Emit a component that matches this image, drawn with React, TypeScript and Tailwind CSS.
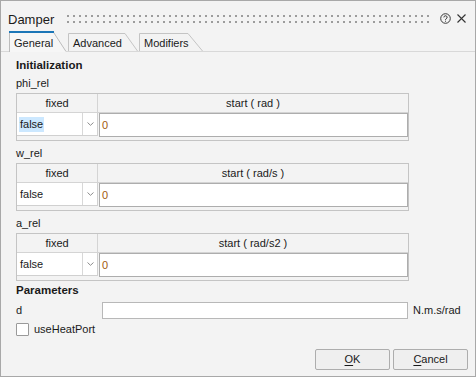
import React from "react";

function Grip() {
  return (
    <svg width="363" height="8" className="block">
      <defs>
        <pattern id="dots" width="6" height="6" patternUnits="userSpaceOnUse">
          <rect x="0" y="0" width="2" height="2" fill="#9c9c9c" />
        </pattern>
      </defs>
      <rect x="0" y="0" width="363" height="8" fill="url(#dots)" />
    </svg>
  );
}

function HelpIcon() {
  return (
    <svg width="11" height="11" viewBox="0 0 11 11" className="block">
      <circle cx="5.5" cy="5.5" r="4.8" fill="none" stroke="#3a3a3a" strokeWidth="1" />
      <path d="M3.9 4.4 A1.6 1.6 0 1 1 6.2 5.8 C5.6 6.1 5.5 6.4 5.5 7" fill="none" stroke="#3a3a3a" strokeWidth="1" />
      <rect x="5" y="7.7" width="1" height="1" fill="#3a3a3a" />
    </svg>
  );
}

function CloseIcon() {
  return (
    <svg width="9" height="9" viewBox="0 0 9 9" className="block">
      <path d="M0.5 0.5 L8.5 8.5 M8.5 0.5 L0.5 8.5" stroke="#333" strokeWidth="1.1" />
    </svg>
  );
}

function Chevron() {
  return (
    <svg width="7" height="4" viewBox="0 0 7 4" className="block">
      <path d="M0.5 0.5 L3.5 3.3 L6.5 0.5" fill="none" stroke="#8c8c8c" strokeWidth="1" />
    </svg>
  );
}

function ParamTable({ unit, selected }: { unit: string; selected?: boolean }) {
  return (
    <div className="mt-[4px] w-[393px] h-[48px] border border-[#c4c4c4] flex flex-col">
      <div className="flex h-[19px] border-b border-[#d4d4d4]">
        <div className="w-[81px] border-r border-[#d4d4d4] flex items-center justify-center leading-none">
          fixed
        </div>
        <div className="flex-1 flex items-center justify-center leading-none">start ( {unit} )</div>
      </div>
      <div className="flex h-[24px]">
        <div className="w-[81px] h-[23px] bg-white flex border-r border-b border-[#d0d0d0]">
          <div className="w-[66px] border-r border-[#d8d8d8] flex items-center pl-[2px]">
            <span
              className={
                selected ? "bg-[#cce8ff] leading-[15px] px-[1px]" : "leading-[15px] px-[1px]"
              }
            >
              false
            </span>
          </div>
          <div className="flex-1 flex items-center justify-center">
            <Chevron />
          </div>
        </div>
        <div className="flex-1 ml-[1px] border border-[#adadad] bg-white flex items-center pl-[2px] text-[#a3580f] leading-none">
          0
        </div>
      </div>
    </div>
  );
}

function Label({ children, bold, mt }: { children: React.ReactNode; bold?: boolean; mt: string }) {
  return (
    <div
      className={
        (bold ? "font-bold text-[11.5px] " : "") + "h-[12px] flex items-center leading-none " + mt
      }
    >
      {children}
    </div>
  );
}

export default function App() {
  return (
    <div className="w-[476px] h-[377px] border border-[#a8a8a8] bg-[#f3f3f3] flex flex-col font-['Liberation_Sans',Arial,sans-serif] text-[11px] text-[#1a1a1a] overflow-hidden">
      {/* title bar */}
      <div className="flex items-start h-[30px] pl-[7px]">
        <div className="w-[59px] mt-[12px] text-[13px] leading-[14px]">Damper</div>
        <div className="mt-[14px]">
          <Grip />
        </div>
        <div className="mt-[12px] ml-[10px]">
          <HelpIcon />
        </div>
        <div className="mt-[13px] ml-[6px]">
          <CloseIcon />
        </div>
      </div>

      {/* tabs */}
      <div className="flex items-end h-[21px] border-b border-[#d8d8d8] pl-[8px]">
        <div className="relative w-[58px] h-[21px] -mb-[1px] pl-[5px] pt-[3px] flex items-center">
          <svg width="58" height="21" viewBox="0 0 58 21" className="absolute inset-0">
            <path d="M0.5 21 V0.5 H44 L57.5 21 Z" fill="#f6f6f6" />
            <path d="M0.5 21 V1 M44 0.5 L57 20.5" fill="none" stroke="#bcbcbc" strokeWidth="1" />
            <rect x="0" y="0" width="45" height="2" fill="#1b76b7" />
          </svg>
          <span className="relative leading-none">General</span>
        </div>
        <div className="relative ml-[1px] w-[70px] h-[18px] pl-[5px] pt-[2px] flex items-center">
          <svg width="70" height="18" viewBox="0 0 70 18" className="absolute inset-0">
            <path d="M0.5 18 V0.5 H57 L69.5 18" fill="none" stroke="#c4c4c4" strokeWidth="1" />
          </svg>
          <span className="relative leading-none">Advanced</span>
        </div>
        <div className="relative ml-[1px] w-[64px] h-[18px] pl-[5px] pt-[2px] flex items-center">
          <svg width="64" height="18" viewBox="0 0 64 18" className="absolute inset-0">
            <path d="M0.5 18 V0.5 H49 L63.5 18" fill="none" stroke="#c4c4c4" strokeWidth="1" />
          </svg>
          <span className="relative leading-none">Modifiers</span>
        </div>
      </div>

      {/* pane */}
      <div className="flex flex-col pl-[15px] pt-[8px]">
        <Label bold mt="">
          Initialization
        </Label>
        <Label mt="mt-[5px]">phi_rel</Label>
        <ParamTable unit="rad" selected />
        <Label mt="mt-[6px]">w_rel</Label>
        <ParamTable unit="rad/s" />
        <Label mt="mt-[6px]">a_rel</Label>
        <ParamTable unit="rad/s2" />
        <Label bold mt="mt-[4px]">
          Parameters
        </Label>
        <div className="mt-[5px] flex items-center h-[17px]">
          <div className="w-[86px] leading-none">d</div>
          <div className="w-[306px] h-[17px] border border-[#b8b8b8] bg-white" />
          <div className="ml-[5px] leading-none">N.m.s/rad</div>
        </div>
        <div className="mt-[4px] flex items-center h-[13px]">
          <div className="w-[13px] h-[13px] border border-[#9a9a9a] bg-white rounded-[1px]" />
          <div className="ml-[5px] leading-none">useHeatPort</div>
        </div>
        <div className="mt-[13px] flex justify-end pr-[7px]">
          <button className="w-[75px] h-[21px] border border-[#adadad] bg-[#efefef] rounded-[2px] flex items-center justify-center leading-none">
            <span>
              <span className="underline underline-offset-[2px]">O</span>K
            </span>
          </button>
          <button className="ml-[3px] w-[75px] h-[21px] border border-[#adadad] bg-[#efefef] rounded-[2px] flex items-center justify-center leading-none">
            <span>
              <span className="underline underline-offset-[2px]">C</span>ancel
            </span>
          </button>
        </div>
      </div>
    </div>
  );
}
